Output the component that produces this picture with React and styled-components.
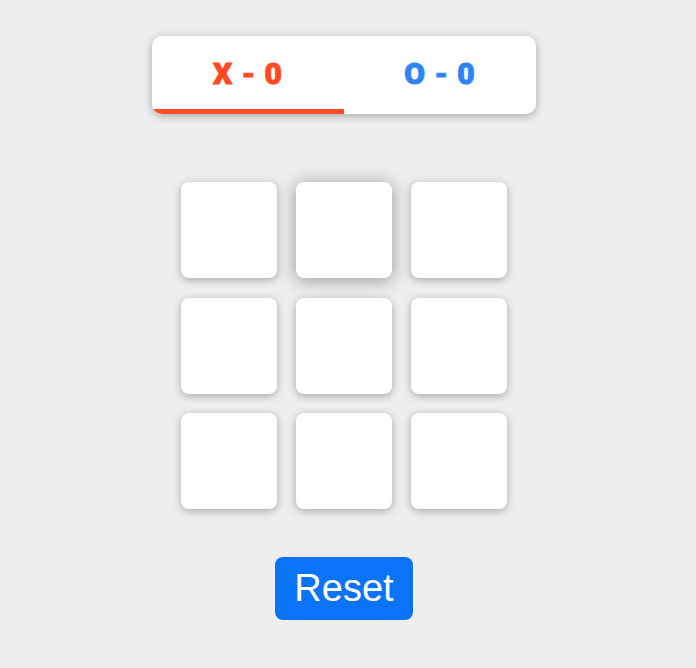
import React, { useState } from 'react';
import styled, { createGlobalStyle } from 'styled-components';

const GlobalStyle = createGlobalStyle`
  body {
    margin: 0;
    background: #eeeeee;
    font-family: "Liberation Sans", Arial, sans-serif;
  }
`;

const Page = styled.main`
  width: 688px;
  display: flex;
  flex-direction: column;
  align-items: center;
  padding-top: 36px;
`;

const ScoreBoard = styled.div`
  position: relative;
  width: 384px;
  height: 78px;
  display: grid;
  grid-template-columns: 1fr 1fr;
  background: #ffffff;
  border-radius: 10px;
  overflow: hidden;
  box-shadow: 0 2px 8px rgba(0, 0, 0, 0.3);
`;

const Score = styled.div`
  display: flex;
  align-items: center;
  justify-content: center;
  padding-bottom: 3px;
  font-family: Roboto, "Open Sans", sans-serif;
  font-weight: 900;
  font-size: 30px;
  letter-spacing: 1px;
  color: ${props => props.color};
  -webkit-text-stroke: 1px ${props => props.color};
`;

const Indicator = styled.span`
  position: absolute;
  left: ${props => (props.turn === 'X' ? '0' : '50%')};
  bottom: 0;
  width: 50%;
  height: 5px;
  background: #ff4b24;
`;

const Board = styled.div`
  display: grid;
  grid-template-columns: repeat(3, 96px);
  grid-auto-rows: 96px;
  column-gap: 19px;
  row-gap: 19.5px;
  margin-top: 68px;
`;

const Cell = styled.button`
  border: none;
  padding: 0;
  background: #ffffff;
  border-radius: 8px;
  box-shadow: ${props => (props.lifted
    ? '0 2px 18px rgba(0, 0, 0, 0.38)'
    : '0 2px 8px rgba(0, 0, 0, 0.3)')};
  cursor: pointer;
`;

const ResetButton = styled.button`
  margin-top: 48px;
  width: 138px;
  height: 63px;
  border: none;
  border-radius: 8px;
  background: #0b73f7;
  color: #ffffff;
  font-family: "Liberation Sans", Arial, sans-serif;
  font-size: 38px;
  cursor: pointer;
`;

export default function App() {
  const [cells, setCells] = useState(Array(9).fill(''));
  const [turn, setTurn] = useState('X');

  const play = (i) => {
    if (cells[i]) return;
    const next = [...cells];
    next[i] = turn;
    setCells(next);
    setTurn(turn === 'X' ? 'O' : 'X');
  };

  return (
    <>
      <GlobalStyle />
      <Page>
        <ScoreBoard>
          <Score color="#ff4b24">X - 0</Score>
          <Score color="#2f84f5">O - 0</Score>
          <Indicator turn={turn} />
        </ScoreBoard>
        <Board>
          {cells.map((c, i) => (
            <Cell key={i} lifted={i === 1} onClick={() => play(i)}>{c}</Cell>
          ))}
        </Board>
        <ResetButton onClick={() => { setCells(Array(9).fill('')); setTurn('X'); }}>
          Reset
        </ResetButton>
      </Page>
    </>
  );
}
